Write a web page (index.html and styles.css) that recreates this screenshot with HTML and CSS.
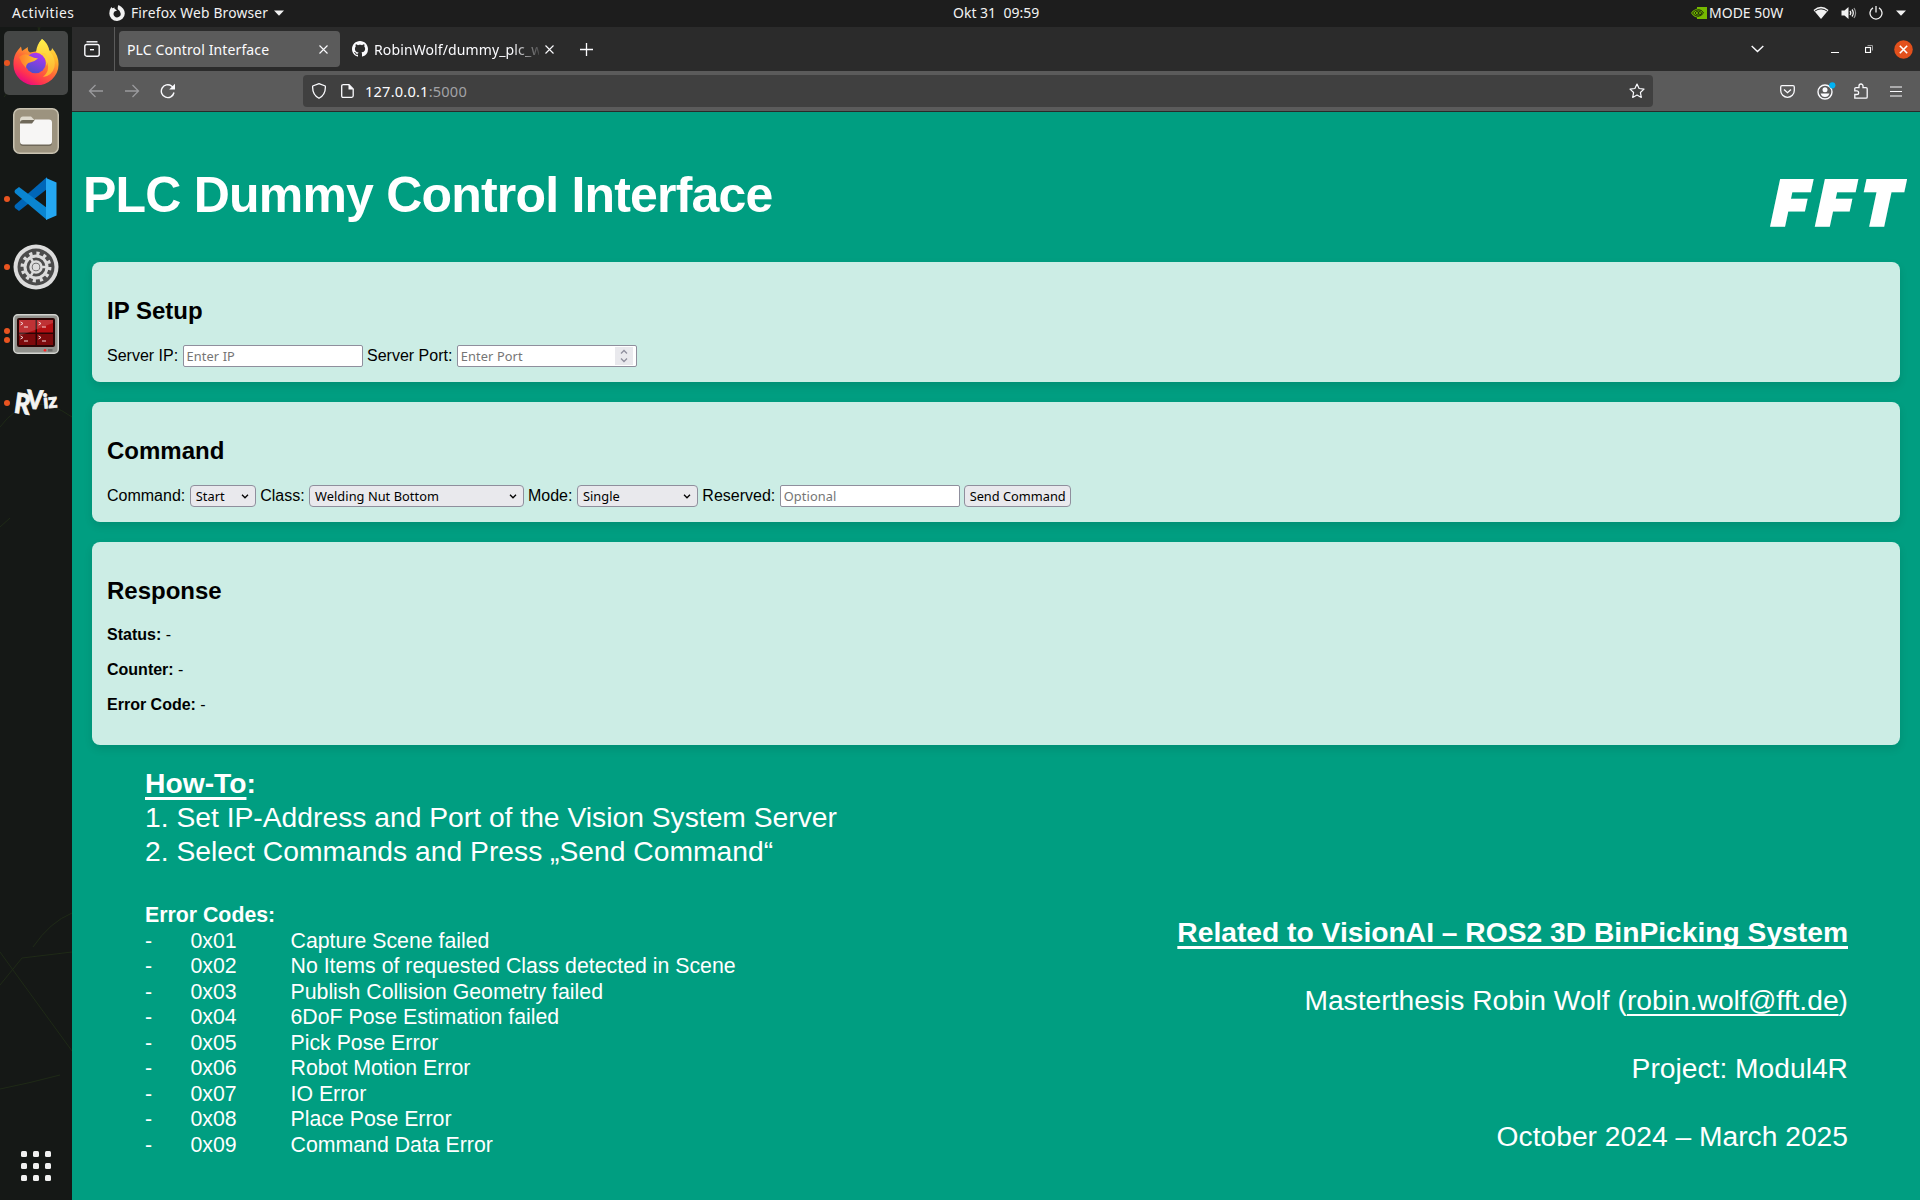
FILE: index.html
```html
<!DOCTYPE html>
<html lang="en">
<head>
<meta charset="utf-8">
<title>PLC Control Interface</title>
<link rel="stylesheet" href="styles.css">
</head>
<body>
<header class="topbar">
  <span class="activities">Activities</span>
  <svg class="ff-mono" width="16" height="16" viewBox="0 0 16 16"><path d="M9.500 0Q15.800 3 15.800 8.600A7.700 7.400 0 0 1 .3 8.400Q.3 4.800 2.300 2L3.400 3.300 5.600 2.600Q5 4 6.800 4.600L8 5.600 5.500 6.600A3.500 3.500 0 1 0 11.300 7.400Q10.800 5.600 9 4.600 8.200 2.500 9.500 0Z" fill="#f2f2f2"/></svg>
  <span class="app-name">Firefox Web Browser</span>
  <svg width="10" height="6" viewBox="0 0 10 6"><path d="M0 .5h10L5 5.800z" fill="#f2f2f2"/></svg>
  <span class="clock">Okt 31&nbsp; 09:59</span>
  <div class="tray">
    <svg class="nvidia" width="16" height="12" viewBox="0 0 16 12"><path d="M6 0h10v12H6z" fill="#76b900"/><path d="M0 6Q3 1.500 8 1.500T14 6Q11 10.500 7 10.500T0 6z" fill="#76b900"/><path d="M1.500 6Q4 2.700 7.500 2.700T12.500 6Q10 9.300 7 9.300T1.500 6M4 6Q5.500 4 7.500 4T10.500 6 7 8Q5 8 4 6" fill="none" stroke="#1b2a08" stroke-width="1"/><circle cx="7.500" cy="6" r="1" fill="#1b2a08"/></svg>
    <span class="mode">MODE 50W</span>
    <svg class="wifi" width="16" height="14" viewBox="0 0 16 14"><path d="M.5 4Q8-2.500 15.500 4L8 13z" fill="#f2f2f2"/><path d="M2 5Q8 .8 14 5" fill="none" stroke="#1d1d1d" stroke-width="1"/></svg>
    <svg class="volume" width="16" height="14" viewBox="0 0 16 14"><path d="M.5 4.500h3L7.500 1v12L3.500 9.500h-3z" fill="#f2f2f2"/><path d="M9 5q1.600 2 0 4M11 3.500q2.600 3.500 0 7" fill="none" stroke="#f2f2f2" stroke-width="1.300"/><path d="M13 2q3.200 5 0 10" fill="none" stroke="#999" stroke-width="1.200"/></svg>
    <svg class="power" width="14" height="14" viewBox="0 0 14 14"><path d="M4 1.900a6 6 0 1 0 6 0M7 0v6.500" fill="none" stroke="#f2f2f2" stroke-width="1.300"/></svg>
    <svg width="10" height="6" viewBox="0 0 10 6"><path d="M0 .5h10L5 5.800z" fill="#f2f2f2"/></svg>
  </div>
</header>
<div class="desktop">
  <nav class="dock">
    <svg class="vines" width="72" height="1173" viewBox="0 0 72 1173"><g fill="none" stroke="#1f2a17" stroke-width="1"><path d="M0 925L13 943 72 1024M0 958L22 931 72 925M33 920Q50 895 72 886M40 0q-8 40-36 70M38 0q8 28 2 60M0 500l10-9M0 400Q30 360 72 390M0 1062q30-6 60-14"/></g></svg>
    <div class="app active one">
      <svg class="up" width="46" height="46" viewBox="0 0 46 46">
        <defs>
          <linearGradient id="fx" x1=".85" y1="0" x2=".25" y2="1"><stop offset="0" stop-color="#fff44f"/><stop offset=".3" stop-color="#ffb52b"/><stop offset=".55" stop-color="#ff6b36"/><stop offset=".8" stop-color="#ff3250"/><stop offset="1" stop-color="#e3008c"/></linearGradient>
          <linearGradient id="fp" x1=".7" y1="0" x2=".3" y2="1"><stop offset="0" stop-color="#b136f4"/><stop offset="1" stop-color="#4a4fc9"/></linearGradient>
          <linearGradient id="fo" x1="0" y1="0" x2="1" y2="0"><stop offset="0" stop-color="#ff7a2b"/><stop offset="1" stop-color="#ffc533"/></linearGradient>
          <linearGradient id="fy" x1="0" y1="0" x2="0" y2="1"><stop offset="0" stop-color="#fff04a"/><stop offset="1" stop-color="#ffab2e"/></linearGradient>
        </defs>
        <path d="M29 0Q35 4 36.500 12 39 12 39 9 46 17 45.500 26A22.500 20.500 0 0 1 .5 26Q0 17 5 11L8 7.500 9 12 15 8Q14 12 17 13.500L25 12Q25 5 29 0z" fill="url(#fx)"/>
        <path d="M29 0Q34 4 36.500 12 43 19 41.500 28 39 37 30 38 37 32 34.500 24 31 16 23 13 24 5 29 0z" fill="url(#fy)"/>
        <circle cx="22.500" cy="24" r="10.300" fill="url(#fp)"/>
        <path d="M27 14Q35 18 33 27 37 20 32 14z" fill="#ffcf3a"/>
        <path d="M6 18Q12 13 17 17 21 19 25 19.500 21 23 17 23.500 13 24 13 29 8 24 6 18z" fill="url(#fo)"/>
      </svg>
    </div>
    <div class="app">
      <svg width="46" height="46" viewBox="0 0 46 46"><rect x=".75" y=".75" width="44.500" height="44.500" rx="6" fill="#9c937f" stroke="#c9c3b2" stroke-width="1.500"/><path d="M7 12q0-3.500 3-3.500h8l4 4h13v12H7z" fill="#dedace"/><rect x="7" y="12" width="32" height="26" rx="3" fill="#6f6859"/><path d="M7 15.500h12l3-4h14q3 0 3 3v19q0 3-3 3H10q-3 0-3-3z" fill="#f7f6f5"/></svg>
    </div>
    <div class="app one">
      <svg width="44" height="44" viewBox="0 0 44 44"><path d="M1 28L33 0v12L5 34 1 31q-1-2 0-3z" fill="#0066b8"/><path d="M1 16L33 43V31L5 10 1 13q-1 2 0 3z" fill="#0a85d1"/><path d="M32 1l10.500 4.500v33L32 43z" fill="#24a7f2"/></svg>
    </div>
    <div class="app one">
      <svg width="46" height="46" viewBox="0 0 46 46"><circle cx="23" cy="23" r="22.500" fill="#dcdcdc"/><circle cx="23" cy="23" r="18.500" fill="#4b4b4b"/><circle cx="23" cy="23" r="13.700" fill="none" stroke="#dcdcdc" stroke-width="3.500" stroke-dasharray="3.170 4"/><circle cx="23" cy="23" r="11" fill="none" stroke="#dcdcdc" stroke-width="3"/><circle cx="23" cy="23" r="5.500" fill="none" stroke="#dcdcdc" stroke-width="2.500"/><path d="M28 23h6M20.500 19l-3-5.500M20.500 27l-3 5.500" stroke="#dcdcdc" stroke-width="2.500"/><circle cx="23" cy="23" r="3.500" fill="#dcdcdc"/></svg>
    </div>
    <div class="app two">
      <svg class="up" width="46" height="40" viewBox="0 0 46 40"><rect x=".75" y=".75" width="44.500" height="38.500" rx="4" fill="#90918c" stroke="#d2d3cf" stroke-width="1.500"/><rect x="4" y="4" width="38" height="29" rx="2" fill="#2b0505"/><g fill="#b40f12"><path d="M6 6h16.500v12.500H6zM24 6h16v12.500H24z"/><path d="M6 20h16.500v11H6zM24 20h16v11H24z" fill="#7d0a0c"/></g><path d="M6 6h34v3L6 22z" fill="#fff" opacity=".15"/><path d="M7.500 8l2.500 1.500L7.500 11M11 13h4M25.500 8l2.500 1.500-2.500 1.500M29 13h4M7.500 22l2.500 1.500L7.500 25M11 27h4M25.500 22l2.500 1.500-2.500 1.500M29 27h4" stroke="#f5d5d5" fill="none"/><circle cx="32" cy="36.300" r="1.300" fill="#f22"/><path d="M35 35h4.500v2.500H35z" fill="#6d6d6a"/></svg>
    </div>
    <div class="app one">
      <svg width="64" height="44" viewBox="-9 -6 64 44" class="rviz"><text x="1" y="26" font-size="28" textLength="16" lengthAdjust="spacingAndGlyphs" transform="rotate(8 5 20)">R</text><text x="14" y="22" font-size="26" textLength="16" lengthAdjust="spacingAndGlyphs" transform="rotate(3 22 14)">V</text><text x="30" y="21" font-size="20" textLength="14" lengthAdjust="spacingAndGlyphs" transform="rotate(-5 36 14)">iz</text></svg>
    </div>
    <svg class="grid-btn" width="30" height="30" viewBox="0 0 30 30" fill="#f1f1f1"><g id="r"><rect width="6" height="6" rx="1.500"/><rect x="12" width="6" height="6" rx="1.500"/><rect x="24" width="6" height="6" rx="1.500"/></g><use href="#r" y="12"/><use href="#r" y="24"/></svg>
  </nav>
  <main class="window">
    <div class="tabs">
      <div class="archive"><svg width="16" height="16" viewBox="0 0 16 16" fill="none" stroke="#fbfbfe" stroke-width="1.400"><path d="M2.500 .8h11"/><rect x=".8" y="3.500" width="14.400" height="11.700" rx="2"/><path d="M6 8.700h4"/></svg></div>
      <div class="tab current"><span class="tab-title">PLC Control Interface</span><svg width="9" height="9" viewBox="0 0 9 9"><path d="M.5.5l8 8M8.500.5l-8 8" stroke="#fbfbfe" stroke-width="1.100"/></svg></div>
      <div class="tab second">
        <svg width="16" height="16" viewBox="0 0 16 16"><path fill="#fbfbfe" d="M8 0C3.580 0 0 3.580 0 8c0 3.540 2.290 6.530 5.470 7.590.4.070.55-.17.550-.38 0-.19-.01-.82-.01-1.490-2.010.37-2.530-.49-2.690-.94-.09-.23-.48-.94-.82-1.130-.28-.15-.68-.52-.01-.53.63-.01 1.080.58 1.230.82.720 1.210 1.870.87 2.330.66.070-.52.280-.87.510-1.070-1.780-.2-3.640-.89-3.640-3.950 0-.87.310-1.590.82-2.150-.08-.2-.36-1.020.08-2.120 0 0 .67-.21 2.200.82.640-.18 1.320-.27 2-.27s1.360.09 2 .27c1.530-1.040 2.200-.82 2.200-.82.440 1.100.16 1.920.08 2.120.51.560.82 1.270.82 2.150 0 3.070-1.870 3.750-3.650 3.950.29.250.54.730.54 1.480 0 1.070-.01 1.930-.01 2.200 0 .21.150.46.550.38A8 8 0 0 0 16 8c0-4.420-3.580-8-8-8z"/></svg>
        <span class="tab-title faded">RobinWolf/dummy_plc_w</span><svg width="9" height="9" viewBox="0 0 9 9"><path d="M.5.5l8 8M8.500.5l-8 8" stroke="#fbfbfe" stroke-width="1.100"/></svg>
      </div>
      <svg class="plus" width="13" height="13" viewBox="0 0 13 13"><path d="M6.500 0v13M0 6.500h13" stroke="#fbfbfe" stroke-width="1.300"/></svg>
      <div class="win-controls">
        <svg class="chev" width="13" height="8" viewBox="0 0 13 8"><path d="M.7 1l5.800 5.600L12.300 1" fill="none" stroke="#fbfbfe" stroke-width="1.400"/></svg>
        <svg class="min" width="8" height="9" viewBox="0 0 8 9"><path d="M0 7.500h8" stroke="#fff"/></svg>
        <svg class="max" width="8" height="8" viewBox="0 0 8 8" fill="none"><path d="M2.500.5h5v5" stroke="#999"/><rect x=".5" y="2.500" width="5" height="5" stroke="#fff" stroke-width="1.200"/></svg>
        <svg width="19" height="19" viewBox="0 0 19 19"><circle cx="9.500" cy="9.500" r="9.300" fill="#e2501c"/><path d="M5.800 5.800l7.400 7.400M13.200 5.800l-7.400 7.400" stroke="#fff" stroke-width="1.600"/></svg>
      </div>
    </div>
    <div class="toolbar">
      <svg class="back" width="16" height="14" viewBox="0 0 16 14" fill="none" stroke="#9a9a9d" stroke-width="1.300"><path d="M15 7H1.500M7.500 1l-6 6 6 6"/></svg>
      <svg class="fwd" width="16" height="14" viewBox="0 0 16 14" fill="none" stroke="#9a9a9d" stroke-width="1.300"><path d="M1 7h13.500M8.500 1l6 6-6 6"/></svg>
      <svg class="reload" width="16" height="16" viewBox="0 0 16 16"><path d="M14 9.500A6.400 6.400 0 1 1 11.500 3L13 4.300" fill="none" stroke="#fbfbfe" stroke-width="1.400"/><path d="M15 .8v5.700H9.200z" fill="#fbfbfe"/></svg>
      <div class="urlbar">
        <svg width="16" height="16" viewBox="0 0 16 16"><path d="M8 .7L14.300 3Q15 11.500 8 15.300 1 11.500 1.700 3z" fill="none" stroke="#fbfbfe" stroke-width="1.300" stroke-linejoin="round"/></svg>
        <svg class="doc" width="13" height="14" viewBox="0 0 13 14"><path d="M2 .7h6l4.200 4.200v6.900q0 1.500-1.500 1.500H2.200q-1.500 0-1.500-1.500V2.200Q.7.700 2.200.7z" fill="none" stroke="#fbfbfe" stroke-width="1.300"/><path d="M7.500.5v5h5z" fill="#fbfbfe"/></svg>
        <span class="url">127.0.0.1<span class="port">:5000</span></span>
        <svg class="star" width="16" height="16" viewBox="0 0 16 16"><path d="M8 1l2.100 4.500 4.900.6-3.600 3.400.9 4.900L8 12l-4.300 2.400.9-4.900L1 6.100l4.900-.6z" fill="none" stroke="#fbfbfe" stroke-width="1.200" stroke-linejoin="round"/></svg>
      </div>
      <div class="tools">
        <svg width="15" height="13" viewBox="0 0 15 13" fill="none" stroke="#fbfbfe" stroke-width="1.300"><path d="M2 .7h11q1.300 0 1.300 1.300v3.500a6.800 6.800 0 0 1-13.600 0V2Q.7.700 2 .7zM4 4.500l3.500 3.200L11 4.500"/></svg>
        <svg class="account" width="19" height="18" viewBox="0 0 19 18"><circle cx="8" cy="10" r="7" fill="none" stroke="#fbfbfe" stroke-width="1.400"/><circle cx="8" cy="7.800" r="2.500" fill="#fbfbfe"/><path d="M3.600 11.500h8.800q-1 3.500-4.400 3.500t-4.400-3.500z" fill="#fbfbfe"/><circle cx="15.300" cy="3.300" r="3.100" fill="#00b3f4"/></svg>
        <svg width="14" height="16" viewBox="0 0 14 16"><path d="M.8 15.200h11.200q1.200 0 1.200-1.200V5.800Q13.200 4.600 12 4.600H9V3a2 2 0 0 0-4 0v1.600H2Q.8 4.600.8 5.800v2h2a1.700 1.700 0 0 1 0 3.700h-2z" fill="none" stroke="#fbfbfe" stroke-width="1.300"/></svg>
        <svg width="12" height="11" viewBox="0 0 12 11"><path d="M0 1h12M0 5.500h12M0 10h12" stroke="#fbfbfe" stroke-width="1.200"/></svg>
      </div>
    </div>
    <div class="page">
      <div class="banner"><h1>PLC Dummy Control Interface</h1><svg class="logo" width="150" height="100" viewBox="0 0 150 100"><g transform="translate(6 73) skewX(-3) scale(.95 .98)"><text x="0" y="0">F</text><text x="47" y="0">F</text><text x="92" y="0">T</text></g></svg></div>
      <section class="card">
        <h2>IP Setup</h2>
        <div class="row">Server IP: <span class="field">Enter IP</span> Server Port: <span class="field number">Enter Port<svg class="spin" width="18" height="18" viewBox="0 0 18 18"><path d="M6 6.500l3-3 3 3M6 11.500l3 3 3-3" fill="none" stroke="#8f8f9d" stroke-width="1.300"/></svg></span></div>
      </section>
      <section class="card">
        <h2>Command</h2>
        <div class="row">Command: <span class="select s1">Start<svg width="8" height="5" viewBox="0 0 8 5"><path d="M1 .8l3 3 3-3" fill="none" stroke="#000" stroke-width="1.300"/></svg></span> Class: <span class="select s2">Welding Nut Bottom<svg width="8" height="5" viewBox="0 0 8 5"><path d="M1 .8l3 3 3-3" fill="none" stroke="#000" stroke-width="1.300"/></svg></span> Mode: <span class="select s3">Single<svg width="8" height="5" viewBox="0 0 8 5"><path d="M1 .8l3 3 3-3" fill="none" stroke="#000" stroke-width="1.300"/></svg></span> Reserved: <span class="field">Optional</span> <button class="send">Send Command</button></div>
      </section>
      <section class="card response">
        <h2>Response</h2>
        <p><b>Status:</b> -</p>
        <p><b>Counter:</b> -</p>
        <p><b>Error Code:</b> -</p>
      </section>
      <div class="notes">
        <div class="howto">
          <div class="line"><b><u>How-To</u>:</b></div>
          <div class="line">1. Set IP-Address and Port of the Vision System Server</div>
          <div class="line">2. Select Commands and Press „Send Command“</div>
          <div class="codes">
            <b class="wide">Error Codes:</b>
            <span>-</span><span>0x01</span><span>Capture Scene failed</span>
            <span>-</span><span>0x02</span><span>No Items of requested Class detected in Scene</span>
            <span>-</span><span>0x03</span><span>Publish Collision Geometry failed</span>
            <span>-</span><span>0x04</span><span>6DoF Pose Estimation failed</span>
            <span>-</span><span>0x05</span><span>Pick Pose Error</span>
            <span>-</span><span>0x06</span><span>Robot Motion Error</span>
            <span>-</span><span>0x07</span><span>IO Error</span>
            <span>-</span><span>0x08</span><span>Place Pose Error</span>
            <span>-</span><span>0x09</span><span>Command Data Error</span>
          </div>
        </div>
        <div class="about">
          <b><u>Related to VisionAI – ROS2 3D BinPicking System</u></b>
          <span>Masterthesis Robin Wolf (<u>robin.wolf@fft.de</u>)</span>
          <span>Project: Modul4R</span>
          <span>October 2024 – March 2025</span>
        </div>
      </div>
    </div>
  </main>
</div>
</body>
</html>
```
FILE: styles.css
```css
* { box-sizing: border-box; }
body { margin: 0; width: 1920px; height: 1200px; overflow: hidden; background: #151716; font-family: "Noto Sans", sans-serif; display: flex; flex-direction: column; }
svg { display: block; flex: none; }
.topbar { position: relative; height: 27px; flex: none; background: #1d1d1d; color: #f2f2f2; font-size: 13.8px; display: flex; align-items: center; padding: 0 14px 2px 12px; white-space: nowrap; }
.activities { width: 97px; letter-spacing: .5px; }
.app-name { margin: 0 5px 0 6px; width: 138px; letter-spacing: .2px; }
.clock { position: absolute; left: 953px; top: 3px; line-height: 19px; font-size: 14px; }
.tray { margin-left: auto; display: flex; align-items: center; }
.mode { margin: 0 29px 0 2px; width: 75px; font-size: 14px; }
.wifi { margin-right: 12px; }
.volume { margin-right: 12px; }
.power { margin-right: 13px; }
.desktop { flex: 1; display: flex; min-height: 0; }
.dock { position: relative; width: 72px; flex: none; background: #151816; display: flex; flex-direction: column; align-items: center; padding: 4px 0 19px; gap: 4px; }
.vines { position: absolute; left: 0; top: 0; }
.app { position: relative; width: 64px; height: 64px; border-radius: 5px; display: flex; align-items: center; justify-content: center; }
.app.active { background: #454746; }
.up { margin-bottom: 2px; }
.one::before, .two::before, .two::after { content: ""; position: absolute; left: 0; top: 29px; width: 6px; height: 6px; border-radius: 50%; background: #e95420; }
.two::before { top: 25px; }
.two::after { top: 34px; }
.rviz { fill: #f4f4f2; stroke: #f4f4f2; stroke-width: .8px; font-family: Lato, sans-serif; font-weight: 900; }
.grid-btn { margin-top: auto; }
.window { flex: 1; display: flex; flex-direction: column; min-width: 0; }
.tabs { height: 44px; flex: none; background: #2b2b2b; display: flex; align-items: center; color: #fbfbfe; font-size: 14px; padding-right: 7px; }
.archive { width: 43px; height: 44px; border-right: 1px solid #5b5b5b; display: flex; align-items: center; padding-left: 12px; margin-right: 4px; }
.tab { height: 36px; display: flex; align-items: center; border-radius: 4px; }
.current { width: 221px; background: #5b5b5b; padding: 0 12px 0 8px; justify-content: space-between; }
.second { width: 214px; padding-left: 12px; gap: 6px; }
.tab-title { white-space: nowrap; line-height: 20px; padding-top: 1px; letter-spacing: .12px; }
.faded { width: 165px; -webkit-mask-image: linear-gradient(90deg, #000 138px, transparent 170px); mask-image: linear-gradient(90deg, #000 138px, transparent 170px); }
.plus { margin-left: 26px; }
.win-controls { margin-left: auto; display: flex; align-items: center; }
.chev { margin-right: 67px; }
.min { margin-right: 26px; }
.max { margin-right: 21px; }
.toolbar { height: 41px; flex: none; background: #5b5b5b; border-bottom: 1px solid #292929; display: flex; align-items: center; padding: 0 18px 0 16px; }
.fwd { margin-left: 20px; }
.reload { margin-left: 20px; }
.urlbar { margin-left: 127px; width: 1350px; height: 32px; border-radius: 4px; background: #404040; display: flex; align-items: center; padding: 0 8px; color: #fbfbfe; font-size: 14.6px; letter-spacing: .2px; }
.doc { margin: 0 11px 0 14px; }
.port { color: #a3a3a6; }
.star { margin-left: auto; }
.tools { margin-left: auto; display: flex; align-items: center; gap: 22px; }
.account { margin-right: -4px; }
.page { flex: 1; background: #009e81; font-family: "Liberation Sans", Arial, sans-serif; font-size: 16px; line-height: 19px; color: #000; padding: 0 20px; }
.banner { height: 150px; margin: 0 -8px 0 -9px; display: flex; justify-content: space-between; color: #fff; }
h1 { margin: 54px 0 0; font-size: 50px; line-height: 58px; letter-spacing: -.8px; white-space: nowrap; }
.logo { margin: 40px -8px 0 0; fill: #fff; stroke: #fff; stroke-width: 3.500px; font: italic 900 62px Inter, sans-serif; }
.card { background: #ccede5; border-radius: 8px; padding: 15px; margin-bottom: 20px; height: 120px; box-shadow: 0 4px 8px rgba(0,0,0,.1); }
.response { height: 203px; margin-bottom: 0; }
h2 { margin: 20px 0; font-size: 24px; line-height: 28px; }
.card p { margin: 0 0 16px; }
.row { height: 22px; line-height: 22px; white-space: nowrap; }
.field, .select, .send { display: inline-flex; vertical-align: top; align-items: center; justify-content: space-between; height: 22px; border: 1px solid #8f8f9d; font-family: "Noto Sans", sans-serif; font-size: 12.8px; line-height: 20px; }
.field { width: 180px; background: #fff; color: #757575; border-radius: 2px; padding: 0 3px; letter-spacing: .1px; }
.spin { background: #e9e9ed; }
.select, .send { background: #e9e9ed; color: #000; border-radius: 4px; padding: 0 6px 0 5px; letter-spacing: .05px; }
.s1 { width: 66px; }
.s2 { width: 214.500px; }
.s3 { width: 121px; }
.send { width: 107px; padding: 0; justify-content: center; letter-spacing: 0; }
.notes { color: #fff; display: flex; justify-content: space-between; padding: 21px 52px 0 53px; white-space: nowrap; }
.line { font-size: 28.250px; line-height: 34px; }
u { text-decoration-thickness: 3px; text-underline-offset: 4px; text-decoration-skip-ink: none; }
span u { text-decoration-thickness: 2px; }
.codes { display: grid; grid-template-columns: 45.500px 100px auto; grid-auto-rows: 25.500px; font-size: 21.300px; line-height: 25.500px; margin-top: 35.400px; }
.wide { grid-column: 1 / 4; }
.about { display: flex; flex-direction: column; align-items: flex-end; font-size: 28.220px; line-height: 68px; margin-top: 132px; }
```
